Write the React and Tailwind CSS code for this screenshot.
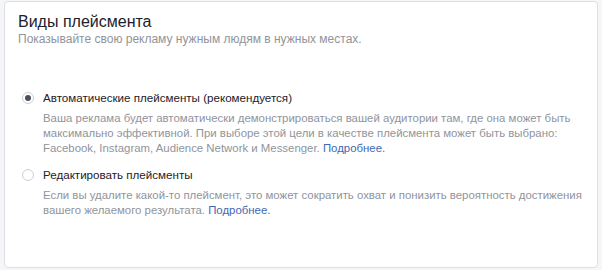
export default function App() {
  return (
    <div className="w-[602px] h-[270px] bg-[#f5f6f7] pt-[1px] px-[4px] font-['Liberation_Sans',Arial,sans-serif]">
      <div className="h-[267px] bg-white border border-[#dddfe2] rounded-[4px] pl-[13px] pr-2 pt-[11px]">
        <div className="text-[16px] leading-[18px] text-[#1d2129]">Виды плейсмента</div>
        <div className="text-[12px] leading-[16px] text-[#90949c]">
          Показывайте свою рекламу нужным людям в нужных местах.
        </div>

        <div className="mt-[43px] flex flex-col gap-[11px]">
          <div>
            <div className="flex items-center gap-[9px] pl-[4px]">
              <span className="w-[12px] h-[12px] rounded-full border border-[#ccd0d5] flex items-center justify-center">
                <span className="w-[6px] h-[6px] rounded-full bg-[#4b4f56]" />
              </span>
              <span className="text-[11.6px] leading-[16px] text-[#1d2129]">
                Автоматические плейсменты (рекомендуется)
              </span>
            </div>
            <p className="pl-[25px] mt-[5px] text-[11.4px] leading-[15px] text-[#90949c] whitespace-nowrap">
              Ваша реклама будет автоматически демонстрироваться вашей аудитории там, где она может быть
              <br />
              максимально эффективной. При выборе этой цели в качестве плейсмента может быть выбрано:
              <br />
              Facebook, Instagram, Audience Network и Messenger.{" "}
              <a className="text-[#4267b2]">Подробнее.</a>
            </p>
          </div>
          <div>
            <div className="flex items-center gap-[9px] pl-[4px]">
              <span className="w-[12px] h-[12px] rounded-full border border-[#ccd0d5]" />
              <span className="text-[11.6px] leading-[16px] text-[#1d2129]">Редактировать плейсменты</span>
            </div>
            <p className="pl-[25px] mt-[5px] text-[11.4px] leading-[15px] text-[#90949c] whitespace-nowrap">
              Если вы удалите какой-то плейсмент, это может сократить охват и понизить вероятность достижения
              <br />
              вашего желаемого результата. <a className="text-[#4267b2]">Подробнее.</a>
            </p>
          </div>
        </div>
      </div>
    </div>
  );
}
